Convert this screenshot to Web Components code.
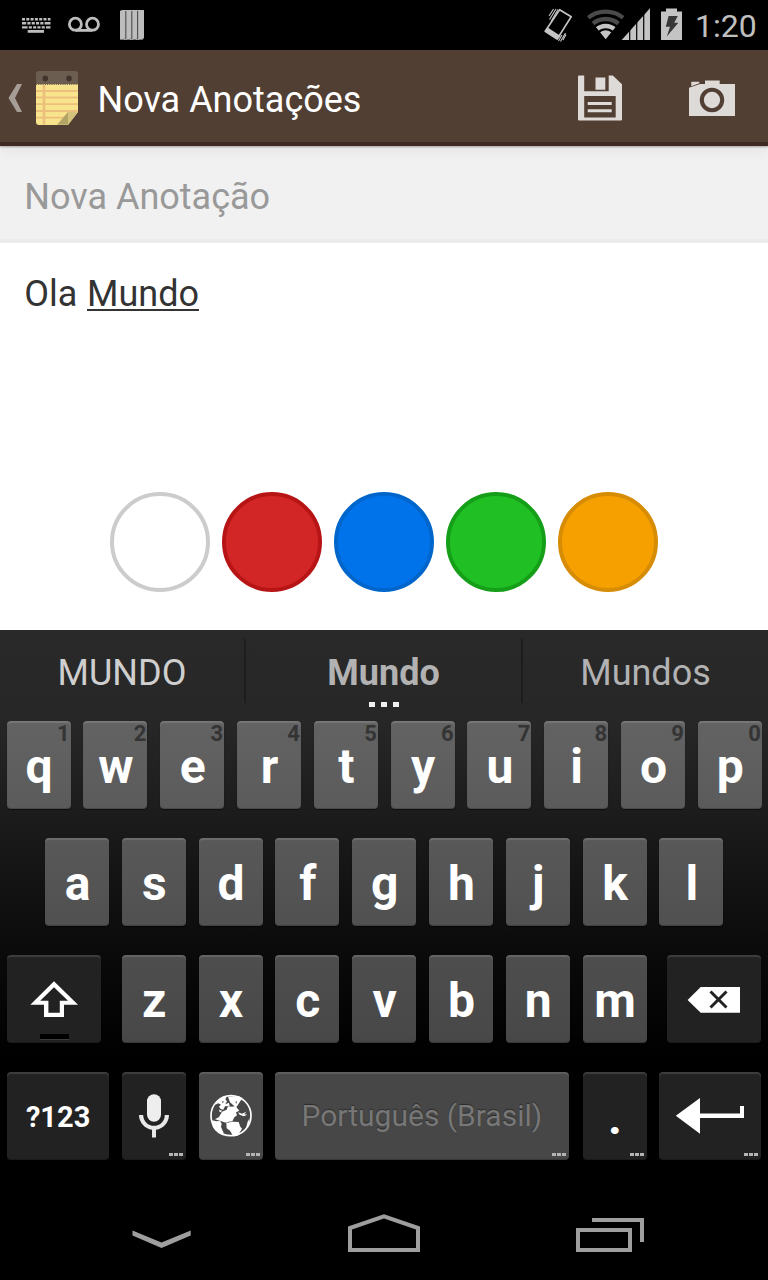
<!DOCTYPE html>
<html lang="pt-BR">
<head>
<meta charset="utf-8">
<title>Nova Anotações</title>
<style>
  body {
    margin: 0;
    background: #000;
    font-family: Roboto, "Noto Sans", sans-serif;
  }
</style>
</head>
<body>
<note-screen></note-screen>

<script>
// name: [viewBox, markup]
const ICONS = {
  keyboard: ['22 0 30 50', `
    <g stroke="#bdbdbd" fill="none">
      <path d="M22 19.2H50.5" stroke-width="2.6" stroke-dasharray="3 1.3"/>
      <path d="M22 23.3H50.5" stroke-width="2.4" stroke-dasharray="4.200 1.2 3.100 1.2 3.100 1.2 3.100 1.2 3.100 1.2 6 9"/>
      <path d="M22 27.4H50.5" stroke-width="2.4" stroke-dasharray="5.600 1.2 3.100 1.2 3.100 1.2 3.100 1.2 3.100 1.2 6 9"/>
      <path d="M27.7 31.4H44" stroke-width="2.8"/>
    </g>`],
  voicemail: ['68 0 32 50', `
    <g stroke="#bdbdbd" stroke-width="2.8" fill="none">
      <circle cx="75.4" cy="24.2" r="6"/><circle cx="92.5" cy="24.2" r="6"/>
      <path d="M75.4 30.4H92.5"/>
    </g>`],
  bars: ['120 0 24 50', `
    <path fill="#bdbdbd" d="M120 11l2-1h22v28l-2 2h-22z"/>
    <path stroke="#4c4c4c" stroke-width="1.1" d="M125.8 11v28.500M131.8 11v28.500M137.600 11v28.500"/>
    <path stroke="#777" d="M120 39.500h4l2-2M127 39.500h3l2-2M133 39.500h3l2-2M139 39.500h3l2-2" fill="none"/>`],
  vibrate: ['544 0 30 50', `
    <path fill="none" stroke="#c4c4c4" stroke-width="1.600" stroke-linejoin="round" d="M559.600 9.700l11.600 7-14 22.300-12-7.700z"/>
    <path fill="#c4c4c4" d="M547.300 27.300l13.400 8.700-3.200 3.800-13-8.300z"/>
    <path fill="none" stroke="#c4c4c4" stroke-width="1.100" d="M549 16l4.500-7M549.500 19.500l6.500-10.500M551 21.500l7-12M558.500 41l3.500-6M560.500 41.500l5-8.500M563 40l3-5.500"/>`],
  network: ['586 0 64 50', `
    <clipPath id="w"><path d="M605.700 39.300L586.500 15.600V5H625V15.600z"/></clipPath>
    <g clip-path="url(#w)" fill="none">
      <circle cx="605.700" cy="39.300" r="27.700" stroke="#4a4a4a" stroke-width="4.200"/>
      <circle cx="605.700" cy="39.300" r="20.300" stroke="#4a4a4a" stroke-width="4.400"/>
      <circle cx="605.700" cy="39.300" r="13.300" stroke="#c4c4c4" stroke-width="4.400"/>
      <circle cx="605.700" cy="39.300" r="9" fill="#c4c4c4"/>
    </g>
    <path fill="#c4c4c4" d="M621.700 40L650 8.300V40z"/>
    <path stroke="#000" stroke-width="1.200" d="M629.700 8v33M636.700 8v33M643.700 8v33"/>`],
  battery: ['661 0 22 50', `
    <path fill="#c4c4c4" d="M661 11.500h5V8.400h11v3.100h5V40h-21z"/>
    <path fill="#383838" d="M668.600 16h9.200l-3.600 6.700h4.200l-11.600 13.800 3.200-9.800h-4.200z"/>`],
  chevron: ['8 0 14 96', `<path fill="#a69d97" d="M8.500 48L17 34h5l-7 14 7 14h-5z"/>`],
  notepad: ['36 0 43 96', `
    <path fill="#6c5d51" d="M36 35V24q0-3 3-3h36q3 0 3 3v11z"/>
    <circle cx="45.300" cy="28.400" r="2.800" fill="#44332a"/><circle cx="69" cy="28.400" r="2.800" fill="#44332a"/>
    <path fill="#f8e48c" d="M36 34h42v28L68 75H39q-3 0-3-3z"/>
    <path stroke="#6c5d51" stroke-width="1.400" stroke-dasharray="1.100 1.100" d="M36 34.300h42"/>
    <path stroke="#ebbf7c" stroke-width="2.600" d="M44 35v39.500"/>
    <path stroke="#ebbf7c" stroke-width="1.800" d="M36 41h42M36 47.500h42M36 54.200h42M36 61h42M36 67.700h30"/>
    <path fill="#b3a468" d="M57 74.800L68 62v12.800z"/>
    <path fill="#d2c27c" d="M68 62h10L68 74.800z"/>`],
  save: ['578 0 44 96', `
    <path fill="#dedad7" fill-rule="evenodd" d="M578 26.500q0-1.100 1.100-1.100H584.200V41.200H608.700V25.400H612.800L622 34.300V69.500q0 1.100-1.100 1.100H579.100q-1.100 0-1.100-1.100zM584.200 46V67.500H615.700V46z"/>
    <path fill="#dedad7" d="M595.500 27.400h9.800v12.300h-9.800zM587.700 51.900h24v3h-24zM587.700 59.200h24v3h-24z"/>`],
  camera: ['689 0 46 96', `
    <path fill="#dedad7" d="M689 37.700L700 34H705V30.400H719.700V34H735V66H689zM691.300 31.800h8v1.500l-8 3z"/>
    <circle cx="712" cy="50" r="10.200" fill="none" stroke="#523f34" stroke-width="4.100"/>`],
  shift: ['7 955 94 88', `
    <path fill="#fff" fill-rule="evenodd" d="M54 981.200L78 1004.700H64V1017H44V1004.700H30.300zM54 987.200L40.200 1000.700H48.400V1012.800H59.800V1000.700H68z"/>
    <path fill="#000" d="M40 1034h29v5H40z"/><path fill="#3c3c3c" d="M40 1039h29v1H40z"/>`],
  backspace: ['667 955 94 88', `
    <path fill="#fff" d="M687.600 1000L700.700 987H740V1012.800H700.700z"/>
    <path stroke="#222" stroke-width="3" d="M710.500 991.500l16 16M726.500 991.500l-16 16"/>`],
  mic: ['122 1072 64 88', `
    <rect x="147" y="1094.200" width="14" height="27.500" rx="7" fill="#eee"/>
    <path fill="#e8e8e8" d="M139 1115h4.200a10.800 10.800 0 0 0 21.600 0H169a15.200 15.200 0 0 1-13 14.800v7.700h-4v-7.700A15.200 15.200 0 0 1 139 1115z"/>`],
  globe: ['597 396 192 264', `
    <circle cx="693" cy="527" r="60" fill="none" stroke="#fff" stroke-width="5"/>
    <path fill="#fff" d="M635 541L650 544 660 542 665 551 663 561 671 579 668 584 680 588 680 589Q650 583 638 560zM645 538L657 531 666 515 680 509 684 499 696 500 706 498 718 512 708 517 711 526 703 532 697 544 686 545 678 548 664 544zM679 549L697 545 716 546 721 560 726 566 713 587 700 589 690 572 680 565zM684 470L715 468 727 474 717 490 709 502 700 496 690 487zM654 481L668 471 680 470 676 478 681 484 676 493 687 488 689 498 675 499 670 509 662 507 657 500 663 494 655 490 645 494zM714 517L726 521 739 515 733 523 742 524 731 529 719 524zM658 509l8 3-3 5-6-3zM743 545l6-10-2 18-10 15z"/>
    <path fill="#474747" d="M706 487l5-5-2 9zM667 483l5 2-5 5z"/>`],
  enter: ['659 1072 102 88', `
    <path fill="#fff" d="M675.800 1115.700L700 1098V1113.600H740V1106H744V1118H700V1133.800z"/>`],
  navback: ['132 1184 60 96', `<path fill="#9e9e9e" d="M132.500 1230.500L161.500 1242.500 190.700 1230.500V1235.500L161.500 1248 132.500 1235.500z"/>`],
  navhome: ['348 1184 72 96', `<path fill="none" stroke="#9e9e9e" stroke-width="4" d="M350 1228V1250H418V1228L384 1216.300z"/>`],
  navrecent: ['576 1184 68 96', `<path fill="none" stroke="#9e9e9e" stroke-width="4" d="M578 1230H630V1250H578zM592 1220H642V1242"/>`]
};

// icons whose viewBox is not 1:1 with pixels
const ICON_SIZE = { globe: [64, 88] };

class AppIcon extends HTMLElement {
  constructor() {
    super();
    this.attachShadow({ mode: 'open' });
  }

  connectedCallback() {
    const name = this.getAttribute('name');
    const [viewBox, markup] = ICONS[name];
    const [width, height] = ICON_SIZE[name] || viewBox.split(' ').slice(2);
    this.shadowRoot.innerHTML = `
      <style>
        :host { display: block; flex: none; }
        svg { display: block; }
      </style>
      <svg width="${width}" height="${height}" viewBox="${viewBox}" aria-hidden="true">${markup}</svg>
    `;
  }
}

class StatusBar extends HTMLElement {
  constructor() {
    super();
    this.attachShadow({ mode: 'open' }).innerHTML = `
      <style>
        :host {
          display: flex;
          height: 50px;
          box-sizing: border-box;
          padding: 0 12px 0 22px;
          background: #000;
          color: #c0c0c0;
        }
        .left { display: flex; gap: 16px; flex: 1; }
        .left app-icon:last-child { margin-left: 4px; }
        .right { display: flex; gap: 12px; }
        .battery { margin-left: -1px; }
        time { width: 61px; font-size: 32px; line-height: 52px; text-align: right; }
      </style>
      <div class="left">
        <app-icon name="keyboard"></app-icon>
        <app-icon name="voicemail"></app-icon>
        <app-icon name="bars"></app-icon>
      </div>
      <div class="right">
        <app-icon name="vibrate"></app-icon>
        <app-icon name="network"></app-icon>
        <app-icon name="battery" class="battery"></app-icon>
        <time><slot></slot></time>
      </div>
    `;
  }
}

class ActionBar extends HTMLElement {
  constructor() {
    super();
    this.attachShadow({ mode: 'open' }).innerHTML = `
      <style>
        :host {
          display: flex;
          position: relative;
          height: 96px;
          box-sizing: border-box;
          padding: 0 33px 0 8px;
          background: linear-gradient(#523f34 92px, #3d2b23 92px);
          box-shadow: 0 1px 2px rgba(0, 0, 0, 0.3), 0 4px 14px rgba(0, 0, 0, 0.06);
          color: #fff;
        }
        .note { margin-left: 14px; }
        h1 {
          flex: 1;
          margin: 0 0 0 18.5px;
          font-size: 36px;
          font-weight: 400;
          line-height: 101px;
          white-space: nowrap;
        }
        .actions { display: flex; gap: 67px; }
      </style>
      <app-icon name="chevron"></app-icon>
      <app-icon name="notepad" class="note"></app-icon>
      <h1><slot></slot></h1>
      <div class="actions">
        <app-icon name="save"></app-icon>
        <app-icon name="camera"></app-icon>
      </div>
    `;
  }
}

class ColorDot extends HTMLElement {
  constructor() {
    super();
    this.attachShadow({ mode: 'open' });
  }

  connectedCallback() {
    this.shadowRoot.innerHTML = `
      <style>
        :host {
          display: block;
          width: 100px;
          height: 100px;
          box-sizing: border-box;
          border-radius: 50%;
          background: ${this.getAttribute('fill')};
          border: 4px solid ${this.getAttribute('ring')};
        }
      </style>
    `;
  }
}

class NoteEditor extends HTMLElement {
  constructor() {
    super();
    this.attachShadow({ mode: 'open' }).innerHTML = `
      <style>
        :host {
          display: flex;
          flex-direction: column;
          height: 484px;
          background: #fff;
          font-size: 36px;
          color: #333;
        }
        .title {
          height: 97px;
          box-sizing: border-box;
          padding-left: 24.3px;
          border-bottom: 4px solid #ececec;
          background: #f1f1f1;
          color: #999;
          line-height: 102px;
        }
        .text { flex: 1; padding: 30px 24.3px 0; line-height: 42px; }
        .colors { display: flex; justify-content: center; gap: 12px; padding-bottom: 38px; }
      </style>
      <div class="title"><slot name="title"></slot></div>
      <div class="text"><slot></slot></div>
      <div class="colors">
        <color-dot fill="#fff" ring="#cccccc"></color-dot>
        <color-dot fill="#d22525" ring="#b71515"></color-dot>
        <color-dot fill="#0073ea" ring="#0066cc"></color-dot>
        <color-dot fill="#20c024" ring="#159f19"></color-dot>
        <color-dot fill="#f6a000" ring="#d68c05"></color-dot>
      </div>
    `;
  }
}

class KeyCap extends HTMLElement {
  constructor() {
    super();
    this.attachShadow({ mode: 'open' });
  }

  connectedCallback() {
    const hint = this.getAttribute('hint');
    const icon = this.getAttribute('icon');
    this.shadowRoot.innerHTML = `
      <style>
        :host {
          display: flex;
          position: relative;
          flex: none;
          width: 64px;
          height: 88px;
          box-sizing: border-box;
          justify-content: center;
          border-radius: 4px;
          background: rgba(255, 255, 255, 0.28);
          box-shadow: inset 0 2px 1px rgba(255, 255, 255, 0.13), inset 0 -1px 1px rgba(0, 0, 0, 0.22), 0 1px 1px rgba(0, 0, 0, 0.5);
          color: #fff;
          font-size: 48px;
          font-weight: 700;
          line-height: 92px;
          white-space: nowrap;
        }
        :host([dark]) { background: #222; }
        :host([wide]) { width: 94.4px; }
        :host([wider]) { width: 102px; font-size: 29px; line-height: 91px; }
        :host([space]) {
          width: 294px;
          color: #777;
          font-size: 30px;
          font-weight: 400;
          line-height: 88px;
          text-shadow: 0 -1px 1px #2c2c2c;
        }
        .label { padding-left: 1px; }
        :host([space]) .label { padding: 0 1px 0 0; }
        .hint {
          position: absolute;
          top: 0;
          right: 1px;
          color: #343434;
          font-size: 22px;
          line-height: 25px;
        }
        .more {
          position: absolute;
          right: 3px;
          bottom: 4px;
          display: flex;
          gap: 1px;
        }
        .more i { width: 4px; height: 3px; background: #b4b4b4; }
      </style>
      ${icon ? `<app-icon name="${icon}"></app-icon>` : '<span class="label"><slot></slot></span>'}
      ${hint ? `<span class="hint">${hint}</span>` : ''}
      ${this.hasAttribute('more') ? '<span class="more"><i></i><i></i><i></i></span>' : ''}
    `;
  }
}

class SuggestionStrip extends HTMLElement {
  constructor() {
    super();
    this.attachShadow({ mode: 'open' }).innerHTML = `
      <style>
        :host {
          display: grid;
          grid-template-columns: 244px 2px 275px 2px 245px;
          height: 91px;
          color: #b2b2b2;
          font-size: 36px;
          line-height: 86px;
          text-align: center;
        }
        .typed { color: #cfcfcf; }
        .best { position: relative; font-weight: 700; }
        .rule { height: 64px; margin-top: 9px; background: #1d1d1d; }
        .dots {
          position: absolute;
          left: 0;
          right: 0;
          top: 72px;
          display: flex;
          justify-content: center;
          gap: 6px;
        }
        .dots i { width: 6px; height: 5px; background: #f0f0f0; }
      </style>
      <span class="typed"><slot name="typed"></slot></span>
      <span class="rule"></span>
      <span class="best"><slot name="best"></slot><span class="dots"><i></i><i></i><i></i></span></span>
      <span class="rule"></span>
      <span><slot name="other"></slot></span>
    `;
  }
}

class SoftKeyboard extends HTMLElement {
  constructor() {
    super();
    const keys = (letters) => [...letters].map((c) => `<key-cap>${c}</key-cap>`).join('');
    const top = [...'qwertyuiop'].map((c, i) => `<key-cap hint="${(i + 1) % 10}">${c}</key-cap>`).join('');
    this.attachShadow({ mode: 'open' }).innerHTML = `
      <style>
        :host {
          display: block;
          height: 554px;
          background: linear-gradient(#292929, #272727 90px, #1a1a1a 200px, #0b0b0b 315px, #000 430px);
        }
        .row { display: flex; gap: 12.8px; padding-left: 6.6px; margin-bottom: 29px; }
        .inset { padding-left: 45px; }
        .shift { margin-right: 8px; }
        .delete { margin-left: 7.4px; }
        .row [space], .symbols { margin-right: 0.4px; }
      </style>
      <suggestion-strip>
        <span slot="typed">MUNDO</span>
        <span slot="best">Mundo</span>
        <span slot="other">Mundos</span>
      </suggestion-strip>
      <div class="row">${top}</div>
      <div class="row inset">${keys('asdfghjkl')}</div>
      <div class="row">
        <key-cap dark wide icon="shift" class="shift"></key-cap>
        ${keys('zxcvbnm')}
        <key-cap dark wide icon="backspace" class="delete"></key-cap>
      </div>
      <div class="row">
        <key-cap dark wider class="symbols">?123</key-cap>
        <key-cap dark icon="mic" more></key-cap>
        <key-cap icon="globe" more></key-cap>
        <key-cap space more>Português (Brasil)</key-cap>
        <key-cap dark more>.</key-cap>
        <key-cap dark wider icon="enter" more></key-cap>
      </div>
    `;
  }
}

class NavBar extends HTMLElement {
  constructor() {
    super();
    this.attachShadow({ mode: 'open' }).innerHTML = `
      <style>
        :host {
          display: flex;
          justify-content: space-between;
          height: 96px;
          padding: 0 124px 0 132px;
          background: #000;
        }
      </style>
      <app-icon name="navback"></app-icon>
      <app-icon name="navhome"></app-icon>
      <app-icon name="navrecent"></app-icon>
    `;
  }
}

class NoteScreen extends HTMLElement {
  constructor() {
    super();
    this.attachShadow({ mode: 'open' }).innerHTML = `
      <style>
        :host {
          display: flex;
          flex-direction: column;
          width: 768px;
          height: 1280px;
          overflow: hidden;
        }
        action-bar { z-index: 1; }
        u {
          display: inline-block;
          height: 36px;
          margin-left: 0.7px;
          border-bottom: 2px solid #333;
          line-height: 42px;
          text-decoration: none;
          vertical-align: top;
        }
      </style>
      <status-bar>1:20</status-bar>
      <action-bar>Nova Anotações</action-bar>
      <note-editor>
        <span slot="title">Nova Anotação</span>
        Ola <u>Mundo</u>
      </note-editor>
      <soft-keyboard></soft-keyboard>
      <nav-bar></nav-bar>
    `;
  }
}

customElements.define('app-icon', AppIcon);
customElements.define('status-bar', StatusBar);
customElements.define('action-bar', ActionBar);
customElements.define('color-dot', ColorDot);
customElements.define('note-editor', NoteEditor);
customElements.define('key-cap', KeyCap);
customElements.define('suggestion-strip', SuggestionStrip);
customElements.define('soft-keyboard', SoftKeyboard);
customElements.define('nav-bar', NavBar);
customElements.define('note-screen', NoteScreen);
</script>
</body>
</html>
